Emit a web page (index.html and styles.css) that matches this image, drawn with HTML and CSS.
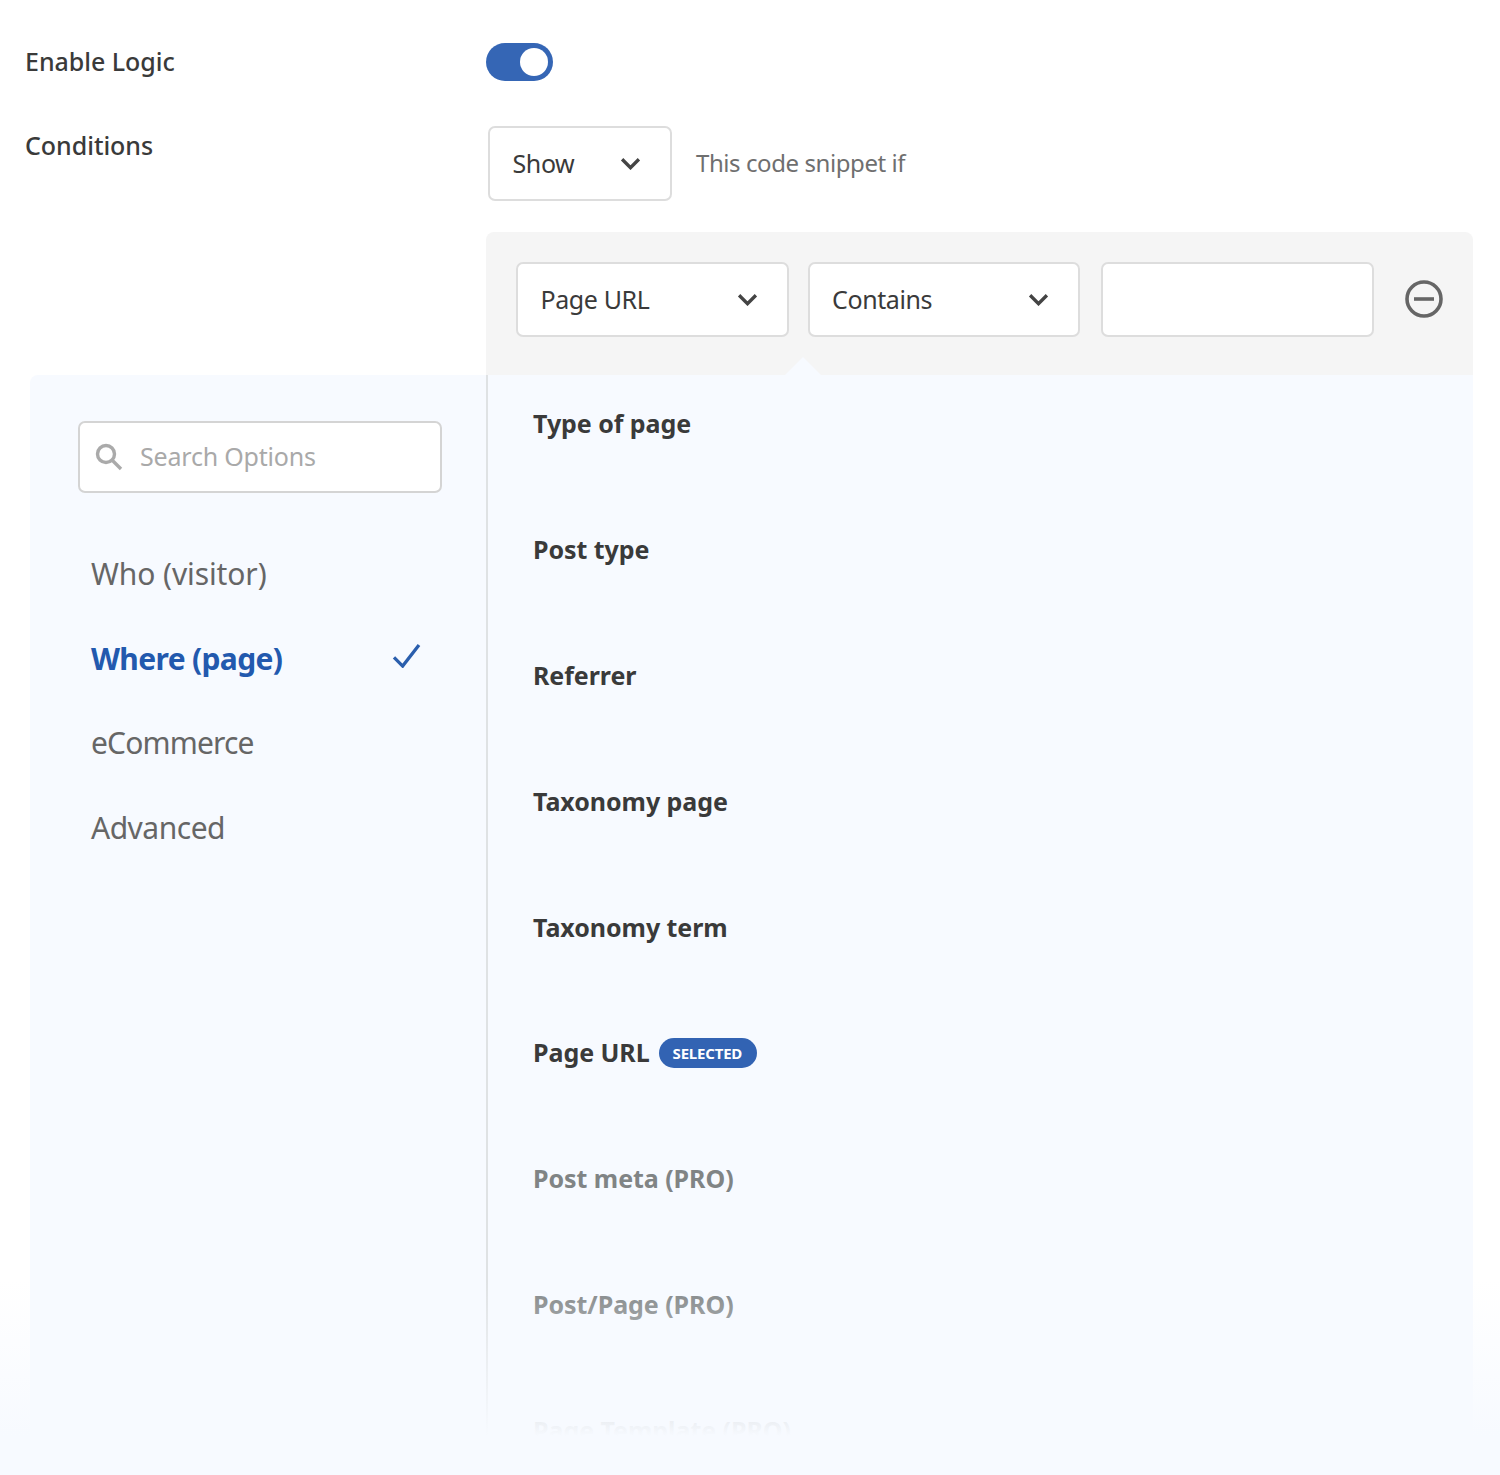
FILE: index.html
```html
<!DOCTYPE html>
<html lang="en">
<head>
    <meta charset="UTF-8">
    <title>Conditional Logic</title>
    <link rel="stylesheet" href="styles.css">
</head>
<body>
    <div class="page">
        <div class="row row-enable">
            <div class="label">Enable Logic</div>
            <div class="toggle"><span class="knob"></span></div>
        </div>
        <div class="row row-conditions">
            <div class="label">Conditions</div>
            <div class="show-line">
                <div class="select select-show">
                    <span>Show</span>
                    <svg class="chevron" viewBox="0 0 20 12"><path d="M2 2l8 8 8-8"/></svg>
                </div>
                <span class="hint">This code snippet if</span>
            </div>
        </div>
        <div class="rule-panel">
            <div class="select">
                <span>Page URL</span>
                <svg class="chevron" viewBox="0 0 20 12"><path d="M2 2l8 8 8-8"/></svg>
            </div>
            <div class="select">
                <span>Contains</span>
                <svg class="chevron" viewBox="0 0 20 12"><path d="M2 2l8 8 8-8"/></svg>
            </div>
            <div class="select select-value"></div>
            <svg class="remove" viewBox="0 0 38 38"><circle cx="19" cy="19" r="17"/><path d="M9 19h20"/></svg>
            <span class="caret"></span>
        </div>
        <div class="dropdown">
            <div class="sidebar">
                <div class="search">
                    <svg class="search-icon" viewBox="0 0 28 28"><circle cx="11" cy="11" r="8.5"/><path d="M17 17l9 9"/></svg>
                    <span>Search Options</span>
                </div>
                <ul class="groups">
                    <li>Who (visitor)</li>
                    <li class="active">Where (page)
                        <svg class="check" viewBox="0 0 30 26"><path d="M2 15l9 9L28 2"/></svg>
                    </li>
                    <li class="tight">eCommerce</li>
                    <li>Advanced</li>
                </ul>
            </div>
            <ul class="options">
                <li>Type of page</li>
                <li>Post type</li>
                <li>Referrer</li>
                <li>Taxonomy page</li>
                <li>Taxonomy term</li>
                <li>Page URL <span class="badge">SELECTED</span></li>
                <li class="pro">Post meta (PRO)</li>
                <li class="pro">Post/Page (PRO)</li>
                <li class="pro">Page Template (PRO)</li>
            </ul>
        </div>
        <div class="fade"></div>
    </div>
</body>
</html>
```

FILE: styles.css
```css
* {
    margin: 0;
    padding: 0;
    box-sizing: border-box;
}

body {
    font-family: 'Noto Sans', 'Open Sans', sans-serif;
    background: #fff;
    color: #3a3a3a;
}

.page {
    position: relative;
    height: 1475px;
    overflow: hidden;
}

.row {
    display: flex;
    padding-left: 25px;
}

.label {
    width: 461px;
    font-size: 25px;
    font-weight: 500;
    letter-spacing: -0.04px;
    line-height: 36px;
    color: #3a3a3a;
}

.row-enable {
    padding-top: 43px;
    height: 126px;
}

.row-conditions {
    height: 106px;
}

.toggle {
    width: 67px;
    height: 38px;
    border-radius: 19px;
    background: #3566b5;
    display: flex;
    justify-content: flex-end;
    align-items: center;
    padding-right: 5px;
}

.knob {
    width: 28px;
    height: 28px;
    border-radius: 50%;
    background: #fff;
}

.row-conditions .label {
    padding-top: 1px;
}

.show-line {
    display: flex;
    align-items: center;
    gap: 24px;
    height: 75px;
    margin-left: 2px;
}

.select {
    width: 272.5px;
    height: 75px;
    flex: none;
    display: flex;
    align-items: center;
    justify-content: space-between;
    padding: 0 29px 2px 22.5px;
    background: #fff;
    border: 2px solid #ddd;
    border-radius: 7px;
    font-size: 25px;
    letter-spacing: -0.4px;
    color: #3a3a3a;
}

.select-show {
    width: 184px;
}

.select-value {
    margin-left: 2px;
}

.chevron {
    width: 21px;
    height: 13px;
    margin-top: 2px;
    fill: none;
    stroke: #444;
    stroke-width: 3.2;
}

.hint {
    font-size: 24px;
    letter-spacing: -0.42px;
    color: #6f6f6f;
    padding-bottom: 3px;
}

.rule-panel {
    position: relative;
    display: flex;
    gap: 19px;
    height: 143px;
    margin: 0 27px 0 486px;
    padding: 30px 0 0 30px;
    background: #f5f5f5;
    border-radius: 8px 8px 0 0;
}

.remove {
    width: 38px;
    height: 38px;
    margin: 18px 0 0 12px;
    fill: none;
    stroke: #666;
    stroke-width: 3.6;
}

.caret {
    position: absolute;
    left: 299px;
    bottom: 0;
    border: 18px solid transparent;
    border-top: 0;
    border-bottom-color: #f7faff;
}

.dropdown {
    display: flex;
    height: 1100px;
    margin: 0 27px 0 30px;
    background: #f7faff;
    border-radius: 8px 0 0 0;
}

.sidebar {
    width: 458px;
    flex: none;
    padding: 46px 44px 0 48px;
    border-right: 2px solid #dfe2e4;
}

.search {
    display: flex;
    align-items: center;
    gap: 17px;
    width: 364px;
    height: 71.5px;
    padding: 0 0 2px 15px;
    background: #fff;
    border: 2px solid #d4d4d4;
    border-radius: 7px;
    font-size: 25px;
    letter-spacing: -0.2px;
    color: #a9a9a9;
}

.search-icon {
    width: 28px;
    height: 28px;
    margin-top: 2px;
    fill: none;
    stroke: #aaa;
    stroke-width: 3.4;
}

.groups {
    list-style: none;
    margin-top: 39.5px;
    padding-left: 13px;
}

.groups li {
    position: relative;
    height: 84.5px;
    line-height: 84.5px;
    font-size: 30px;
    letter-spacing: -0.1px;
    color: #666;
}

.groups .active {
    font-weight: 700;
    letter-spacing: -0.65px;
    color: #2259ae;
}

.groups .tight {
    letter-spacing: -0.85px;
}

.groups li:last-child {
    letter-spacing: -0.5px;
}

.check {
    position: absolute;
    right: 21px;
    top: 26px;
    width: 29px;
    height: 25px;
    fill: none;
    stroke: #2a5ead;
    stroke-width: 3.4;
}

.options {
    list-style: none;
    padding: 0 0 0 45px;
}

.options li {
    display: flex;
    align-items: center;
    gap: 9px;
    height: 125.9px;
    font-size: 25px;
    font-weight: 700;
    letter-spacing: -0.05px;
    color: #3a3a3a;
    position: relative;
    top: -15px;
}

.options .pro {
    color: #808485;
}

.badge {
    padding: 0 15px 0 14px;
    height: 30px;
    line-height: 30px;
    margin-top: 1px;
    border-radius: 15px;
    background: #3263b3;
    color: #fff;
    font-size: 15px;
    letter-spacing: -0.2px;
}

.fade {
    position: absolute;
    left: 0;
    right: 0;
    bottom: 0;
    height: 195px;
    background: linear-gradient(to bottom, rgba(247, 250, 255, 0) 0%, #f7faff 80%);
    pointer-events: none;
}
```
